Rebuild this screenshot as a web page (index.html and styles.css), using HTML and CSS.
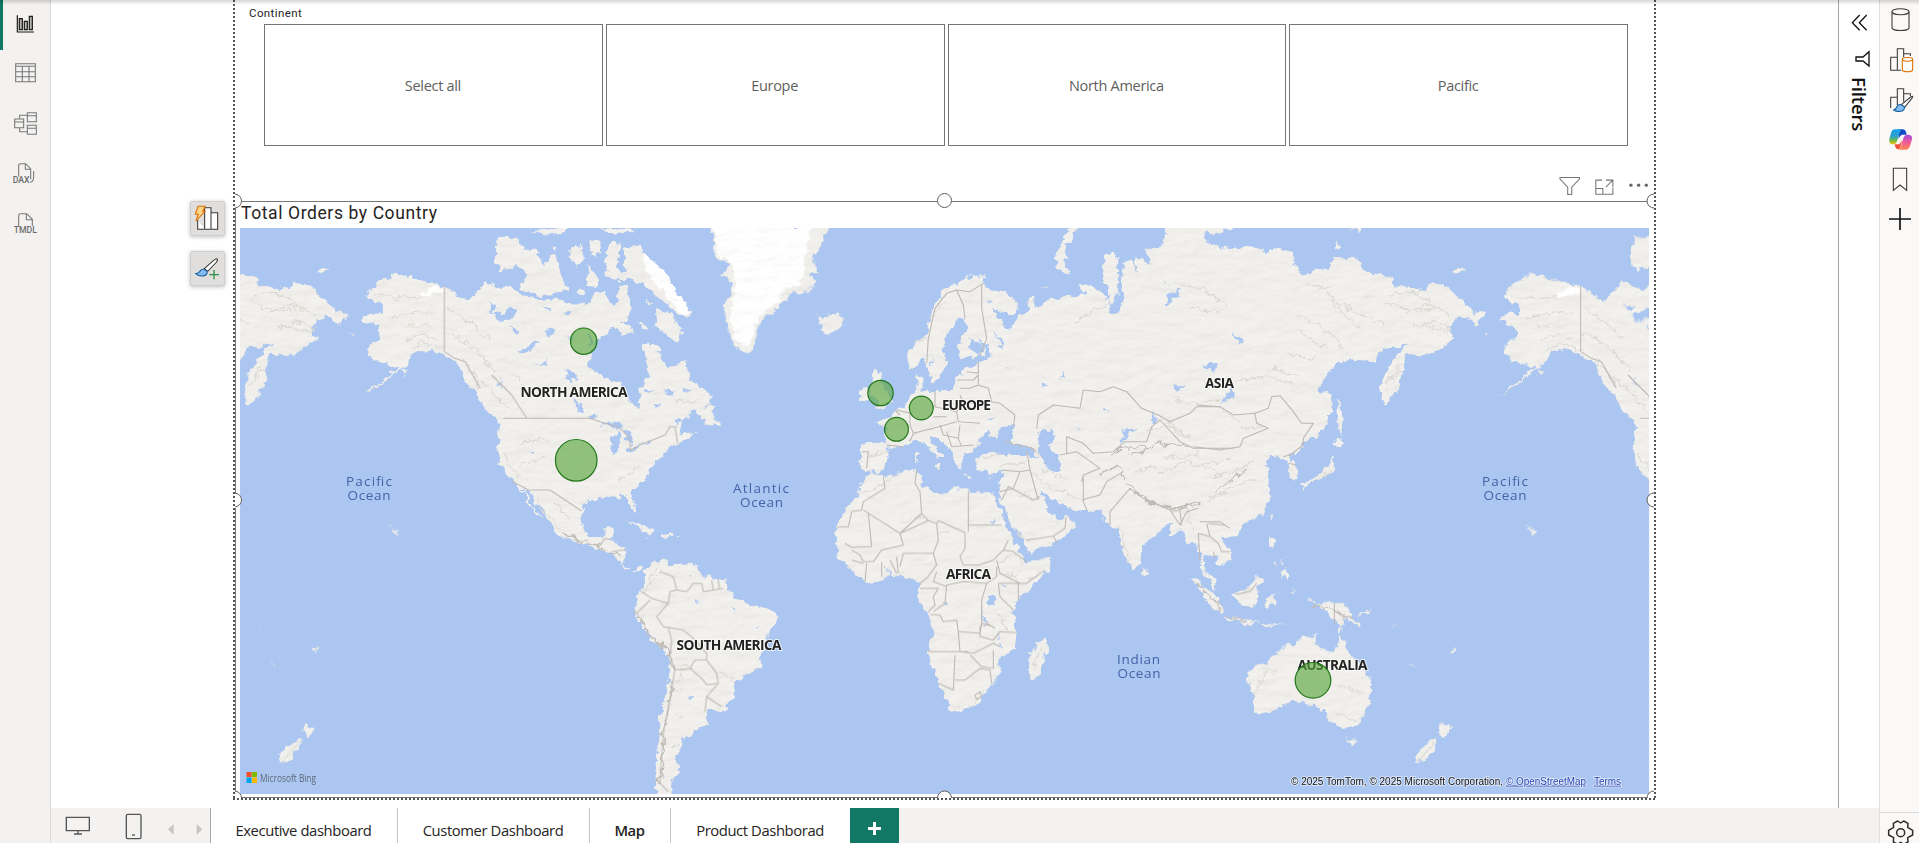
FILE: index.html
```html
<!DOCTYPE html>
<html lang="en">
<head>
<meta charset="utf-8">
<title>Report view</title>
<link rel="stylesheet" href="styles.css">
</head>
<body>
<div class="app">
  <nav class="rail rail-left">
    <a class="rail-item active"><svg viewBox="0 0 150 150" class="ico dark"><path d="M52 46V96H102"/><path class="shade" d="M58 56H67V89H58ZM73 64H82V89H73ZM88 49H97V89H88Z"/></svg></a>
    <a class="rail-item"><svg viewBox="0 150 150 150" class="ico grey"><path d="M47 191H106V245H47ZM47 199H106M47 215H106M47 230H106M67 199V245M87 199V245"/></svg></a>
    <a class="rail-item"><svg viewBox="0 300 150 150" class="ico grey"><path d="M82 338H109V365H82ZM82 347H109M82 376H109V403H82ZM82 385H109M44 357H71V383H44ZM44 366H71M59 357V346H82M59 383V395H82"/></svg></a>
    <a class="rail-item"><svg viewBox="0 450 150 150" class="ico grey"><path d="M56 530V497Q56 491 62 491H77L92 507V538M76 491V508H92M101 513V531Q101 545 91 547"/><text x="38" y="550" textLength="51" lengthAdjust="spacingAndGlyphs">DAX</text></svg></a>
    <a class="rail-item"><svg viewBox="0 600 150 150" class="ico grey"><path d="M56 678V647Q56 641 62 641H80L97 658V678M79 641V659H97"/><text x="41" y="700" textLength="70" lengthAdjust="spacingAndGlyphs">TMDL</text></svg></a>
  </nav>

  <div class="center">
    <div class="workspace">
      <main class="stage">
        <div class="visual-tools">
          <button class="tool"><svg viewBox="570 603 105 105" class="ico"><path class="fill-w dk" d="M593 660V688H653V638H633V623H614V688M614 640V688M633 638V688"/><path class="bolt" d="M594 619H616L608 634H615L588 663L595 643H586Z"/></svg></button>
          <button class="tool"><svg viewBox="570 753 105 105" class="ico"><path class="fill-w dk" d="M613 806L640 782Q650 774 652 777Q654 781 647 789L623 814Z"/><path class="paint" d="M612 808L622 815Q621 827 608 828Q596 829 587 821Q598 820 601 812Q605 806 612 808Z"/><path class="green" d="M642 810V838M628 824H657"/></svg></button>
        </div>
        <section class="report">
          <div class="slicer">
            <h3 class="slicer-title">Continent</h3>
            <div class="slicer-row">
              <button class="chip">Select all</button>
              <button class="chip">Europe</button>
              <button class="chip">North America</button>
              <button class="chip">Pacific</button>
            </div>
          </div>
          <div class="visual-actions">
            <svg viewBox="175 525 275 65" class="ico grey actions-ico"><path d="M181 532H239V537L216 561V583H204V561L181 537ZM307 540H288V582H339V562M288 565H309V582M318 540H339V560M318 561L338 541"/><g class="dots"><circle cx="393" cy="555" r="5"/><circle cx="416" cy="555" r="5"/><circle cx="439" cy="555" r="5"/></g></svg>
          </div>
          <article class="visual">
            <h2 class="visual-title">Total Orders by Country</h2>
            <svg class="map" viewBox="240 228 1409 566" preserveAspectRatio="none">
              <defs>
                <filter id="terrain" filterUnits="userSpaceOnUse" x="235" y="222" width="1420" height="578" color-interpolation-filters="sRGB">
                  <feTurbulence type="fractalNoise" baseFrequency="0.13" numOctaves="3" seed="4" result="n"/>
                  <feDisplacementMap in="SourceGraphic" in2="n" scale="9" xChannelSelector="R" yChannelSelector="G" result="land"/>
                  <feTurbulence type="fractalNoise" baseFrequency="0.04 0.08" numOctaves="3" seed="9" result="h"/>
                  <feDiffuseLighting in="h" surfaceScale="2.4" lighting-color="#fff" result="light"><feDistantLight azimuth="240" elevation="60"/></feDiffuseLighting>
                  <feComposite in="land" in2="light" operator="arithmetic" k1="0.1" k2="0.913" result="lit"/>
                  <feComposite in="lit" in2="land" operator="in"/>
                </filter>
                <filter id="wobble" filterUnits="userSpaceOnUse" x="235" y="222" width="1420" height="578" color-interpolation-filters="sRGB">
                  <feTurbulence type="fractalNoise" baseFrequency="0.13" numOctaves="3" seed="7" result="n"/>
                  <feDisplacementMap in="SourceGraphic" in2="n" scale="10" xChannelSelector="R" yChannelSelector="G"/>
                </filter>

                <g id="land">
                  <!-- North America and the Arctic islands -->
                  <g transform="translate(235 225) scale(.33333)">
                    <path d="M480 145L560 165L628 182L665 205L695 230L720 205L750 170L800 185L840 190L860 215L920 225L960 220L1010 235L1060 235L1080 200L1110 205L1130 240L1150 225L1155 180L1180 185L1190 250L1170 285L1130 315L1090 345L1065 385L1062 425L1110 460L1160 475L1180 520L1210 548L1215 490L1240 450L1225 360L1270 355L1280 400L1300 430L1350 405L1370 470L1430 510L1425 540L1380 560L1325 590L1320 612L1345 585L1340 625L1390 620L1340 650L1290 680L1240 740L1230 765L1190 800L1205 860L1190 855L1170 810L1140 822L1110 815L1050 830L1035 880L1050 935L970 935L930 870L880 795L860 790L900 850L925 885L905 870L870 820L840 770L805 740L790 700L790 590L750 550L720 490L690 460L660 405L600 380L540 375L520 420L490 435L440 480L370 520L440 470L490 425L440 415L400 395L395 370L440 330L430 300L380 290L400 265L440 265L440 240L390 212L430 170Z"/>
                    <path d="M785 35L840 35L870 70L830 130L800 138L778 110ZM870 75L900 70L930 120L960 80L975 140L1000 195L930 215L880 205L850 190L880 150L835 110ZM1010 70L1040 55L1045 110L1025 130L1000 95ZM1065 45L1100 50L1100 80L1080 95L1058 75ZM1060 125L1090 160L1085 190L1055 185ZM1115 160L1112 80L1135 55L1160 50L1145 110L1150 150L1175 145L1165 70L1215 60L1240 100L1300 150L1320 200L1375 260L1350 280L1290 235L1240 190L1190 165L1150 165ZM1235 220L1250 230L1240 242ZM1270 245L1310 270L1345 320L1325 355L1290 325L1255 305ZM1205 290L1240 300L1230 312ZM1145 290L1185 300L1195 325L1155 330ZM1030 190L1050 195L1045 210L1028 208ZM880 22L930 10L1000 10L990 22L940 30ZM1090 10L1200 10L1190 24L1120 25ZM950 65L965 60L970 75ZM500 430L520 440L505 455ZM378 395L393 398M245 138L262 126L282 135L262 146ZM335 325L360 330L345 335Z"/>
                    <path class="ice" d="M1225 80L1245 100L1300 150L1320 200L1365 255L1350 270L1300 225L1265 180L1220 120ZM560 205L600 185L630 190L625 200L550 220Z"/>
                    <path d="M690 455L715 470L730 495L700 490ZM755 550L800 585L790 590ZM1380 555L1440 540L1415 600Z"/>
                    <path d="M1170 888L1230 900L1265 915L1250 922L1200 898Z"/>
                    <path d="M440 895L495 915L485 925Z" opacity=".5"/>
                  </g>
                  <!-- Greenland, Iceland, Newfoundland -->
                  <g transform="translate(640 225) scale(.33333)">
                    <path d="M205 5L218 40L225 95L265 115L235 150L270 160L275 200L250 240L262 300L275 345L300 378L335 390L350 335L365 290L390 265L430 240L445 205L500 205L530 170L510 150L540 145L520 100L545 60L562 10L570 5Z"/>
                    <path class="ice" d="M215 5L228 40L238 90L280 120L285 200L275 240L275 300L290 345L325 365L340 325L355 285L380 255L420 230L435 190L480 185L490 120L500 60L520 5Z"/>
                    <path d="M528 268L545 285L575 268L600 265L618 285L600 310L570 328L540 318L545 300L528 285ZM205 560L225 575L245 605L215 598L188 600Z"/>
                  </g>
                  <!-- Central and South America -->
                  <g transform="translate(560 500) scale(.33333)">
                    <path d="M-30 0L60 0L62 55L75 95L100 112L125 110L135 85L160 85L150 120L195 145L190 190L215 210L245 195L250 215L200 210L165 165L100 140L40 122L0 105Z"/>
                    <path d="M250 215L275 185L310 178L330 192L395 190L430 225L490 240L525 295L560 310L640 330L657 355L630 400L610 440L600 500L525 545L520 590L485 640L440 632L447 678L400 690L390 712L370 715L345 780L362 800L335 850L335 890L292 890L288 800L300 650L325 540L330 470L265 410L220 340L240 270L258 240Z"/>
                    <path d="M195 62L240 75L280 92L262 98L225 78ZM300 100L335 98L340 108L300 113ZM250 110L270 108L268 114ZM350 108L364 112L352 115Z"/>
                  </g>
                  <!-- Europe and western Asia -->
                  <g transform="translate(800 225) scale(.33333)">
                    <path d="M325 425L320 385L350 350L380 330L388 290L400 250L430 200L455 180L500 155L555 150L550 175L580 195L625 205L655 240L650 268L620 268L580 252L600 290L620 315L650 280L690 255L682 215L700 215L710 248L750 220L800 215L855 205L835 180L880 180L920 210L930 245L920 180L905 150L912 95L935 78L955 95L955 200L925 255L950 265L975 225L965 195L968 115L990 100L1010 140L1000 90L1055 120L1035 70L1090 60L1100 0L1340 0L1280 70L1320 65L1320 930L1265 935L1190 900L1110 935L1110 865L960 870L965 935L960 905L935 905L905 860L850 862L800 845L760 825L725 800L745 850L780 890L795 870L830 900L790 935L690 935L640 870L600 820L595 790L610 735L580 745L530 735L520 700L570 680L620 690L690 690L720 700L690 668L630 650L645 600L600 612L585 640L560 622L540 645L525 680L490 690L485 735L465 715L450 670L415 640L388 632L400 655L432 695L412 698L375 660L345 645L310 665L260 665L270 700L250 735L210 742L182 730L182 658L255 655L260 612L225 590L265 580L300 550L330 520L350 490L348 450L368 455L368 500L400 500L460 490L480 450L500 425L540 412L565 395L540 388L480 400L470 365L500 300L492 278L470 292L435 340L430 380L440 410L420 460L395 472L385 430L370 400L345 430Z"/>
                    <path d="M215 430L245 440L245 475L280 530L255 550L218 555L240 530L208 500L220 460ZM180 492L205 482L208 525L176 536ZM808 5L835 8L802 60L796 110L812 155L770 130L763 100L788 50ZM728 190L738 190L735 200ZM400 722L425 722L415 735ZM348 680L358 680L356 710L348 708ZM490 750L515 755L500 758ZM565 755L580 752L570 762ZM690 212L705 212L700 245L685 240Z"/>
                  </g>
                  <!-- Eastern Asia and Japan -->
                  <g transform="translate(1200 225) scale(.33333)">
                    <path d="M60 76L130 62L200 80L240 65L285 80L280 105L310 155L350 130L385 135L400 95L470 100L500 140L580 155L580 180L680 195L690 170L740 185L800 235L820 265L860 265L830 300L785 275L740 305L765 345L700 385L640 395L620 385L610 420L605 470L570 530L550 545L540 490L560 430L600 380L625 350L590 370L555 365L525 410L470 405L410 415L360 480L350 500L395 505L395 560L360 630L310 660L290 680L265 690L290 730L285 765L268 755L265 710L245 700L215 690L190 720L215 735L200 760L215 810L195 860L130 900L90 910L60 940L0 940L-60 800L-60 76Z"/>
                    <path d="M405 688L400 748L345 768L308 795L300 775L350 752L385 720ZM410 635L438 655L420 668L400 660ZM412 515L428 570L420 640L412 600ZM402 52L428 70L405 72ZM208 870L218 868L210 892ZM420 8L490 8L480 18Z"/>
                  </g>
                  <!-- Africa, Arabia, India -->
                  <g transform="translate(800 450) scale(.33333)">
                    <path d="M210 65L255 78L350 55L368 75L362 105L430 135L460 110L500 122L580 130L592 165L625 240L645 275L660 310L680 335L750 325L745 362L655 450L640 490L650 545L645 595L595 632L605 665L570 710L530 770L450 788L440 755L415 700L380 605L400 550L385 490L355 455L360 400L320 385L290 375L200 398L155 365L110 310L108 230L140 170L175 135L185 90Z"/>
                    <path d="M735 558L745 590L715 680L695 688L680 665L690 605ZM595 145L640 230L680 280L685 312L770 280L830 225L800 195L780 215L745 190L720 140L700 90ZM905 150L905 190L925 230L950 235L965 300L1000 358L1022 345L1025 290L1110 220L1112 180L1140 210L1190 290L1210 240L1200 150ZM1030 350L1042 368L1032 382L1022 368Z"/>
                  </g>
                  <!-- Southeast Asia, Australia, New Zealand -->
                  <g transform="translate(1150 500) scale(.33333)">
                    <path d="M60 -20L65 40L90 80L115 135L140 120L155 180L152 205L185 265L200 272L195 240L165 210L160 165L190 170L210 200L248 178L245 150L205 108L225 80L260 80L330 50L362 0Z"/>
                    <path d="M118 235L150 245L220 320L216 342L188 325L150 270ZM222 346L290 358L335 368L300 372L232 360ZM250 280L285 265L320 228L342 240L325 260L332 290L310 322L265 310ZM348 290L400 278L372 290L380 318L362 305L352 335L345 315ZM463 293L490 300L500 315L540 305L572 300L600 335L637 383L580 355L578 378L545 362L525 335ZM620 345L662 325L650 345ZM340 370L415 372L350 382ZM565 380L575 380L575 398L563 396ZM357 110L375 120L365 148L357 140ZM390 210L412 205L412 230L400 228ZM372 180L385 190L378 195ZM395 170L402 190L394 190ZM425 270L433 270L430 290ZM250 92L265 95L258 110Z"/>
                    <path d="M295 510L350 485L385 455L415 425L430 440L455 408L505 405L495 430L550 462L562 440L570 400L600 465L650 510L668 570L635 660L600 687L545 675L520 625L510 635L495 605L480 615L430 600L380 630L315 640L310 590L293 540ZM585 712L622 715L605 745ZM870 670L905 680L885 715L868 700ZM855 710L862 730L830 780L800 790L795 770ZM768 485L795 498L788 502ZM1130 82L1160 98L1150 104ZM895 455L915 440L910 460ZM725 375L742 380L730 382Z"/>
                  </g>
                </g>

                <g id="water">
                  <g transform="translate(235 225) scale(.33333)">
                    <path d="M1090 605L1130 585L1165 605L1150 612L1120 600ZM1135 690L1130 640L1155 615L1148 680ZM1165 615L1195 625L1190 660L1175 650ZM1170 675L1215 660L1205 675L1180 682ZM1210 658L1245 645L1240 655ZM760 235L790 245L775 265ZM780 270L830 250L850 262L815 290L790 290ZM850 375L915 345L890 375L860 382ZM925 320L960 310L965 325L935 335ZM900 420L940 405L935 420ZM1010 520L1030 530L1050 560L1035 565ZM985 430L1005 435L1030 450L1010 475ZM1060 570L1085 575L1070 588ZM990 260L1005 265L995 275ZM920 238L950 260L940 265ZM1220 495L1260 490L1240 505ZM1290 490L1320 495L1305 510ZM1340 488L1370 495L1350 503ZM1260 535L1275 530L1265 550ZM1000 330L1010 335L1005 355ZM830 300L850 320L840 325ZM885 675L898 682L892 690ZM1060 320L1075 350L1060 370ZM790 455L800 490L792 480Z"/>
                  </g>
                  <g transform="translate(800 225) scale(.33333)">
                    <path d="M715 620L750 610L770 635L745 660L775 700L780 735L745 738L722 690L715 650ZM545 350L570 375L578 395L560 398ZM590 320L605 350L608 380L592 350ZM505 340L545 350L550 385L510 385ZM965 615L1015 610L985 625L970 655ZM1255 540L1295 490L1305 505L1275 535ZM1095 235L1110 205L1145 195L1130 220L1100 240ZM1205 420L1245 415L1250 445L1225 435ZM1300 325L1332 345L1315 360ZM1275 70L1210 45L1220 15L1240 30L1300 10L1335 10L1300 40L1320 60ZM725 480L745 478L730 500ZM780 440L790 450L783 460ZM390 410L400 405L392 425ZM568 575L585 572L578 582ZM618 420L635 430L620 430ZM555 220L585 235L560 232ZM1100 170L1105 185L1098 180ZM1120 480L1150 485L1130 500ZM1055 565L1070 580L1058 600ZM835 610L850 618L838 622ZM915 550L930 560L918 565Z"/>
                  </g>
                  <g transform="translate(800 450) scale(.33333)">
                    <path d="M570 437L590 437L588 463L570 460ZM545 465L548 500L568 522L560 525L543 500ZM595 535L600 575L606 595L600 590L593 550ZM565 215L590 210L580 225ZM257 345L272 372L262 372ZM605 400L615 410L608 412ZM430 460L445 455L438 465Z"/>
                  </g>
                  <g transform="translate(560 500) scale(.33333)">
                    <path d="M512 318L524 330L518 335ZM410 298L425 303L415 306ZM585 385L600 376L590 388ZM385 588L400 596L388 596ZM328 430L335 445L330 445ZM385 215L395 220L390 228Z"/>
                  </g>
                </g>

                <g id="ridges">
                  <g transform="translate(235 225) scale(.33333)">
                    <path d="M800 685L830 730L850 750M860 655L900 640L950 655M850 720L900 710L940 690M510 345L560 325L600 345M530 375L570 350L630 380M680 405L715 450L735 490M420 210L500 220L560 215M460 280L540 260L600 265M500 300L590 300M640 250L700 290L760 340M640 320L720 370L780 440M700 430L760 490L820 550M960 830L1000 880M900 820L940 870L975 910M1150 770L1210 720M40 490L75 430M100 260L180 240L240 270M60 210L140 200M130 310L190 290L240 310M840 450L860 480M1320 530L1400 525"/>
                  </g>
                  <g transform="translate(800 225) scale(.33333)">
                    <path class="deep" d="M980 775L1030 820L1090 845L1150 850L1195 835M1000 800L1060 838L1130 846M930 695L960 670L1040 665M990 690L1080 655L1170 662M620 650L680 665L730 695M900 750L950 720L975 760M1250 800L1300 760L1340 735"/>
                    <path d="M1080 745L1160 710L1240 735M700 750L760 790L840 820M730 735L800 760M600 725L690 710M540 700L600 690M1040 620L1100 600L1160 640M1100 590L1170 640M1120 520L1200 540L1260 520M1300 470L1400 460M820 300L870 260L920 245M1140 180L1220 200L1280 240M1170 250L1260 260M1330 610L1400 600M1090 700L1200 690M1220 830L1290 790L1370 760M340 620L400 612M330 640L345 625M350 350L380 340M390 280L440 230M210 690L265 680M1000 740L1070 725"/>
                  </g>
                  <g transform="translate(1200 225) scale(.33333)">
                    <path d="M380 200L420 260L480 310M290 270L370 310L430 370M300 320L380 370M410 230L480 270L560 300M120 470L200 450L280 480M220 430L300 450M320 180L400 190M560 230L640 260L720 250M640 300L740 320M270 390L340 400M60 550L120 590M10 720L90 700M30 760L100 740L160 710M50 800L90 770M580 470L600 420M360 760L395 740M620 200L700 230"/>
                  </g>
                  <g transform="translate(560 500) scale(.33333)">
                    <path class="deep" d="M225 330L270 405L330 460L345 505M340 545L325 620L310 700L308 790L300 850M5 100L60 120L120 140L180 165"/>
                    <path d="M250 280L300 215M265 240L290 200M350 550L370 510L385 520M360 490L395 505M340 570L365 575M480 510L520 540M350 640L370 650M335 740L360 730"/>
                  </g>
                  <g transform="translate(800 450) scale(.33333)">
                    <path d="M190 130L230 115L290 75M600 340L640 310L670 340M610 370L650 380M680 395L720 365M450 770L520 765L550 720M640 240L680 270M590 480L620 540M700 660L725 590M960 230L985 330M420 240L445 250M310 220L370 200M660 130L700 145"/>
                  </g>
                  <g transform="translate(1150 500) scale(.33333)">
                    <path class="deep" d="M490 318L550 330L610 360M135 245L215 325M225 352L290 362"/>
                    <path d="M110 30L130 90M270 285L300 265M310 590L350 520M560 560L640 580M560 640L620 660M805 785L855 725M380 520L340 500"/>
                  </g>
                </g>

                <g id="borders">
                  <path transform="translate(235 225) scale(.33333)" d="M628 182V380M628 380L660 400L690 410L735 490M805 580H1065L1100 592L1150 605L1185 640L1185 675L1215 660L1290 630L1305 605L1320 605L1328 655M770 450L830 510L875 580M830 768L880 795L945 795L990 825L1040 858"/>
                  <path transform="translate(560 500) scale(.33333)" d="M120 135L135 115L150 118M155 155L195 150M300 215L340 230L350 270L380 275L400 250L425 250L430 275L490 265M455 240L460 270M475 240L478 268M245 275L275 295L325 310L330 275L350 270M235 335L270 300M325 310L290 350L310 380L370 390L400 415L440 460L440 480L470 520L475 550L440 590L435 635M325 385L335 420L330 470L345 510L390 505L405 480L440 480M390 505L430 540L440 555L470 550M440 590L485 620M345 505L330 600L310 700L300 850L325 875"/>
                  <path transform="translate(800 225) scale(.33333)" d="M380 415L385 340L405 250L440 205L470 195L490 240L495 280M470 195L510 200L550 175M545 180L545 250L560 340L540 390M500 440L535 445L535 410M470 465L520 465L535 450L535 480L510 490L480 490M535 480L565 490L575 530L490 535L480 510M405 500L405 545L470 560L490 530M575 530L600 535L645 570L640 605M470 560L475 590L540 595M290 555L330 565L330 600L340 625L400 610L470 590M300 570L285 555M400 575L440 575M420 600L430 630L475 640L480 600M440 620L455 665L520 660M475 640L485 665M340 625L330 650M185 680L205 680L200 730M260 660L310 665M710 610L715 570L760 540L840 550L850 495L900 500L940 485L980 500L1025 550L1075 570L1110 590L1170 565L1190 545L1260 545M800 685V635L850 655L880 685L940 680L975 650L1040 650L1055 605L1080 585M1080 585L1140 650L1180 670L1300 670M780 690L830 680L900 730L850 750L845 770M680 675L690 735L705 790L715 825M605 735L660 740L690 735M660 740L640 790L600 800M850 760L850 830L860 855M845 825L900 810L920 770L970 740M930 860L930 900M930 860L990 790L1030 820L1110 855L1190 830M1110 855L1140 900L1160 860L1195 850"/>
                  <path transform="translate(1200 225) scale(.33333)" d="M-10 540L60 545L100 570L165 565L205 550L215 515L240 512L280 560L305 595L340 595L310 640L310 660M165 565L170 595L205 610L130 640L120 665L60 675L-20 665M310 660L270 690L250 695M265 715L290 720M0 890L60 890L90 910"/>
                  <path transform="translate(800 450) scale(.33333)" d="M250 80L255 115L190 155L185 180L155 185L145 230L110 232M350 60L345 100L360 125L365 190L300 250L190 180M205 190L215 290L155 292L135 280M300 250L310 285L245 300L220 335L190 335L180 315L155 300M365 190L385 212L410 220L415 270L400 310L310 310L300 350M505 125V245M410 220L415 212L495 248M505 225H605M495 248V295L480 320L490 345L535 345L580 330L610 300L640 305L680 335M400 310L410 345L380 385L360 400M385 212L300 250M410 365L400 395L440 410M360 415H415L400 440L405 465L385 485M440 405L435 460L400 485M440 405L490 395L560 400L590 380L590 350M560 400L545 450L545 520L580 530M595 400L600 440L640 480M655 400V450M595 400L655 400L680 400L735 360M390 493L420 495L430 515L470 510L475 545L540 550L545 520M475 545L480 605L520 610L580 580L600 590M385 605H505M465 615L460 720L415 700M465 690L495 690L540 655L570 660L575 700M510 615L545 650L580 655L580 600M585 535L560 520L540 530L540 560L580 570L600 545L650 548M525 735L540 725L545 738L530 748ZM245 335L245 380M270 330L290 370M200 340L195 395M155 330L190 340M290 320L295 370M610 300L625 270M590 330L600 370L660 400M680 270L760 258L795 235L798 200M760 258L770 278M605 150L625 110L700 150L720 140"/>
                  <path transform="translate(1150 500) scale(.33333)" d="M553 310V375M145 100L150 180M145 100L180 110L205 130L215 155L240 155M170 70L180 110M190 155L195 175M255 283L300 275L320 250M175 70L225 75M65 35L90 30L95 75"/>
                </g>
              </defs>

              <rect class="ocean" x="240" y="228" width="1409" height="566"/>
              <g class="land" filter="url(#terrain)">
                <use href="#land"/><use href="#land" x="-1136.3"/><use href="#land" x="1136.3"/>
              </g>
              <g filter="url(#wobble)">
                <g class="lakes"><use href="#water"/><use href="#water" x="-1136.3"/><use href="#water" x="1136.3"/></g>
                <g class="ridges"><use href="#ridges"/><use href="#ridges" x="-1136.3"/><use href="#ridges" x="1136.3"/></g>
              </g>
              <g class="borders"><use href="#borders"/><use href="#borders" x="-1136.3"/><use href="#borders" x="1136.3"/></g>

              <g class="continent">
                <text x="520.5" y="397" textLength="107">NORTH AMERICA</text>
                <text x="676.5" y="650" textLength="105">SOUTH AMERICA</text>
                <text x="942" y="410" textLength="49">EUROPE</text>
                <text x="1205" y="388" textLength="29">ASIA</text>
                <text x="946" y="579" textLength="45">AFRICA</text>
                <text x="1297.5" y="670" textLength="70">AUSTRALIA</text>
              </g>
              <g class="sea">
                <text x="346" y="485.5" textLength="46">Pacific</text><text x="347.5" y="500" textLength="43">Ocean</text>
                <text x="733" y="492.5" textLength="56">Atlantic</text><text x="740" y="507" textLength="43">Ocean</text>
                <text x="1117" y="663.5" textLength="43">Indian</text><text x="1117.5" y="678" textLength="43">Ocean</text>
                <text x="1482" y="485.5" textLength="46">Pacific</text><text x="1483.5" y="500" textLength="43">Ocean</text>
              </g>
              <g class="bubbles">
                <circle cx="583.7" cy="341.2" r="13.2"/><circle cx="576.2" cy="460.3" r="20.8"/><circle cx="880.5" cy="393" r="12.7"/><circle cx="921.3" cy="408" r="11.9"/><circle cx="896.5" cy="429.3" r="11.9"/><circle cx="1313" cy="680.3" r="17.8"/>
              </g>
              <g class="bing"><path fill="#f25022" d="M246.500 772H251.500V777H246.500Z"/><path fill="#7fba00" d="M252 772H257V777H252Z"/><path fill="#00a4ef" d="M246.500 777.500H251.500V783H246.500Z"/><path fill="#ffb900" d="M252 777.500H257V783H252Z"/><text x="260" y="782" textLength="56" lengthAdjust="spacingAndGlyphs">Microsoft Bing</text></g>
              <g class="credit">
                <text x="1291" y="784.500" textLength="212" lengthAdjust="spacingAndGlyphs">© 2025 TomTom, © 2025 Microsoft Corporation,</text>
                <text class="link" x="1506" y="784.500" textLength="80" lengthAdjust="spacingAndGlyphs">© OpenStreetMap</text>
                <text class="link" x="1594" y="784.500" textLength="27" lengthAdjust="spacingAndGlyphs">Terms</text>
              </g>
            </svg>
          </article>
          <svg class="selection" viewBox="235 192 1419 606"><path d="M235.500 208V493M235.500 508V791M242 201.500H1647M242 797.500H1647"/><circle cx="234.500" cy="201" r="7"/><circle cx="944.500" cy="200.500" r="7"/><circle cx="1654" cy="201" r="7"/><circle cx="234.500" cy="500" r="7"/><circle cx="1654" cy="500" r="7"/><circle cx="234.500" cy="798" r="7"/><circle cx="944.500" cy="798" r="7"/><circle cx="1654" cy="798" r="7"/></svg>
        </section>
      </main>
      <aside class="filters">
        <svg viewBox="1017 0 120 225" class="ico black filters-ico"><path d="M1079 45L1057 68L1079 91M1100 45L1078 68L1100 91M1107 155V198L1089 183H1068V171H1089Z"/></svg>
        <span class="filters-label">Filters</span>
      </aside>
    </div>
    <footer class="tabs">
      <div class="views">
        <svg viewBox="3 24 480 105" class="views-ico"><path d="M49 52H118V92H49ZM84 92V101M72 102H96"/><rect x="229" y="43" width="44" height="73" rx="4"/><path d="M246 105H255"/><path class="arrow" d="M371 72V104L354 88ZM440 72V104L457 88Z"/></svg>
      </div>
      <a class="tab t1">Executive dashboard</a>
      <a class="tab t2">Customer Dashboard</a>
      <a class="tab t3 current">Map</a>
      <a class="tab t4">Product Dashborad</a>
      <button class="add"><svg viewBox="0 0 49 35"><path d="M24.500 14V27M18 20.500H31"/></svg></button>
    </footer>
  </div>

  <nav class="rail rail-right">
    <svg viewBox="1140 0 117 120" class="ico dk"><path d="M1176 35V84C1180 94 1223 94 1227 84V35"/><ellipse cx="1201.500" cy="35" rx="25.500" ry="9"/></svg>
    <svg viewBox="1140 120 117 120" class="ico dk"><path d="M1192 211H1172V172H1192M1192 211V146H1211V172M1192 211H1203M1211 161H1231V168"/><path class="orange" d="M1207 178V210C1210 217 1235 217 1238 210V178"/><ellipse class="orange" cx="1222.500" cy="178" rx="15.500" ry="5.500"/></svg>
    <svg viewBox="1140 240 117 120" class="ico dk"><path d="M1172 324V292H1192M1192 315V266H1211V305M1211 281H1231V288"/><path class="fill-w" d="M1204 314L1232 291Q1240 286 1237 293L1214 322Z"/><path class="paint" d="M1203 314L1214 321Q1213 333 1201 334Q1190 336 1181 330Q1190 326 1191 319Q1196 312 1203 314Z"/></svg>
    <svg viewBox="1140 360 117 120" class="ico"><defs><linearGradient id="ca" x1="0" y1="0" x2="0" y2="1"><stop offset="0" stop-color="#16a3ee"/><stop offset=".45" stop-color="#2f9fd0"/><stop offset=".7" stop-color="#5dba58"/><stop offset="1" stop-color="#f5c400"/></linearGradient><linearGradient id="cb" x1="0" y1="0" x2="0" y2="1"><stop offset="0" stop-color="#a349e0"/><stop offset=".5" stop-color="#ee5a9a"/><stop offset="1" stop-color="#ff8a50"/></linearGradient></defs><g stroke="none"><path fill="#1748c5" d="M1195 388H1209Q1216 388 1218 396L1220 404H1206Q1200 405 1196 416Z"/><path fill="url(#ca)" d="M1183 388H1206Q1201 390 1199 398L1191 424Q1188 433 1180 433Q1165 434 1168 418L1173 398Q1176 389 1183 388Z"/><path fill="#f0503c" d="M1184 433H1198L1207 420L1201 441Q1199 448 1194 448Q1187 447 1186 440Z"/><path fill="url(#cb)" d="M1221 404Q1239 403 1236 418L1230 438Q1227 448 1219 449H1195Q1201 447 1203 439L1211 412Q1214 404 1221 404Z"/></g></svg>
    <svg viewBox="1140 480 117 120" class="ico dk"><path d="M1180 505H1220V571L1200 555L1180 571Z"/></svg>
    <svg viewBox="1140 600 117 120" class="ico black"><path stroke-width="5" d="M1200 624V690M1167 657H1233"/></svg>
    <div class="settings"><svg viewBox="300 188 117 93" class="ico gear"><path d="M353 212L362 218L371 212L384 219L383 231L398 240V254L383 262L384 275L371 282L362 276L353 282L340 275L341 262L326 254V240L341 231L340 219Z"/><circle cx="362" cy="247" r="12"/></svg></div>
  </nav>
</div>
<div class="top-shadow"></div>
</body>
</html>
```
FILE: styles.css
```css
* { box-sizing: border-box; }
body { margin: 0; background: #fff; font-family: "Open Sans", "Noto Sans", sans-serif; color: #252423; overflow: hidden; }
svg { display: block; }
button { font: inherit; padding: 0; }
h2, h3 { margin: 0; font-weight: 400; font-family: Roboto, sans-serif; }

.app { display: flex; width: 1919px; height: 843px; }
.rail { flex: none; display: flex; flex-direction: column; }
.rail-left { width: 51px; background: #f3f2f1; border-right: 1px solid #dcdbda; }
.rail-item { height: 50px; display: block; }
.rail-item svg { width: 50px; height: 50px; }
.rail-item.active { box-shadow: inset 3px 0 #117865; }
.rail-right { width: 40px; background: #faf9f8; border-left: 1px solid #e1dfdd; }
.rail-right > svg { width: 39px; height: 40px; }
.settings { margin-top: auto; height: 31px; border-top: 1px solid #d8d8d8; }
.settings svg { width: 39px; height: 31px; }

.ico { fill: none; stroke-width: 3.2; }
.ico.grey { stroke: #777; }
.ico.grey text { fill: #6b6b6b; stroke: none; font: 500 25px Roboto, sans-serif; }
.ico.dark { stroke: #1b1a19; stroke-width: 3.6; }
.ico .shade { fill: #b5b5b5; }
.ico.black { stroke: #111; stroke-width: 4; }
.ico.dk, .dk { stroke: #3b3a39; }
.ico.gear { stroke: #2f2e2d; stroke-width: 4.5; stroke-linejoin: round; }
.fill-w { fill: #fff; }
.bolt { fill: #fcd78a; stroke: #e06c00; }
.paint { fill: #84bdf0; stroke: #14609c; }
.green { stroke: #2f8f46; stroke-width: 4; }
.orange { stroke: #e06c00; fill: #fff; }
.dots { fill: #666; stroke: none; }

.center { flex: 1; min-width: 0; display: flex; flex-direction: column; }
.workspace { height: 808px; display: flex; }
.stage { flex: 1; display: flex; }
.visual-tools { width: 182px; padding: 201px 8px 0 0; display: flex; flex-direction: column; align-items: flex-end; gap: 15px; }
.tool { width: 35px; height: 35px; border: 1px solid #d0cfce; border-radius: 2px; background: #e1dfdd; box-shadow: 0 1px 4px rgba(0,0,0,.25); }
.tool svg { width: 35px; height: 35px; margin: -1px; }

.report {
  position: relative; width: 1423px; height: 800px; padding: 0 7px 0 7px;
  background:
    repeating-linear-gradient(#555 0 2px, transparent 2px 4px) left / 2px 100% no-repeat,
    repeating-linear-gradient(#555 0 2px, transparent 2px 4px) right / 2px 100% no-repeat,
    repeating-linear-gradient(90deg, #555 0 2px, transparent 2px 4px) bottom / 100% 2px no-repeat;
}
.slicer { height: 174px; padding: 5px 21px 0 24px; }
.slicer-title { margin-left: -15px; height: 19px; font-size: 11.5px; line-height: 16px; letter-spacing: .4px; }
.slicer-row { display: grid; grid-template-columns: repeat(4, 1fr); gap: 3px; height: 122px; }
.chip { border: 1px solid #757575; background: #fff; color: #605e5c; font-size: 14.5px; letter-spacing: -.3px; padding-right: 1px; }
.visual-actions { height: 24px; display: flex; justify-content: flex-end; margin-right: -1px; }
.actions-ico { width: 92px; height: 22px; margin-top: 1px; }
.visual { display: flex; flex-direction: column; }
.visual-title { height: 30px; padding: 2px 0 0 1px; font-size: 17.5px; line-height: 26px; letter-spacing: .6px; }
.selection { position: absolute; left: 2px; top: 192px; width: 1419px; height: 606px; fill: #fff; stroke: #605e5c; pointer-events: none; }
.selection path { fill: none; stroke: #777; }

.map { width: 1409px; height: 566px; }
.ocean { fill: #abc6f1; }
.land { fill: #f0efeb; }
.ice { fill: #fefefe; }
.lakes { fill: #abc6f1; }
.ridges { fill: none; stroke: #dbd9d4; stroke-width: 3.6; }
.ridges, .deep { stroke-linecap: round; }
.deep { stroke: #bfbcb8; stroke-width: 5; }
.borders { fill: none; stroke: #beb8b4; stroke-width: 3.2; stroke-linejoin: round; }
.continent { font: 700 13.8px "Open Sans", sans-serif; fill: #222; stroke: #fff; stroke-width: 2px; stroke-opacity: .7; paint-order: stroke; }
.sea { font: 500 13.5px "Open Sans", sans-serif; fill: #4264a8; }
.bubbles { fill: rgba(86,164,56,.62); stroke: #23771a; stroke-width: 1.2; }
.bing text { font: 10px "Open Sans", sans-serif; fill: #5f6874; }
.credit { font: 10px "Liberation Sans", sans-serif; fill: #111; stroke: #fff; stroke-width: 1.6px; stroke-opacity: .65; paint-order: stroke; }
.credit .link { fill: #2a45b0; text-decoration: underline; }

.filters { width: 41px; border-left: 1px solid #a6a6a6; display: flex; flex-direction: column; align-items: center; }
.filters-ico { width: 40px; height: 75px; }
.filters-label { writing-mode: vertical-rl; font-size: 18.5px; line-height: 24px; font-weight: 600; color: #111; padding: 2px 0 0 0; letter-spacing: -.15px; }

.tabs { flex: 1; display: flex; background: #f3f2f1; }
.views { width: 160px; border-right: 1px solid #a8a8a8; }
.views-ico { width: 160px; height: 35px; fill: none; stroke: #555; stroke-width: 4; }
.views-ico .arrow { fill: #c8c6c4; stroke: none; }
.tab { height: 35px; background: #fff; border-right: 1px solid #c8c6c4; padding-right: 1px; text-align: center; font-size: 14.8px; line-height: 45px; letter-spacing: -.4px; white-space: nowrap; overflow: hidden; }
.t1 { width: 187px; }
.t2 { width: 192px; }
.t3 { width: 81px; }
.t4 { width: 179px; border-right: 0; }
.current { font-weight: 600; }
.add { width: 49px; height: 35px; border: 0; background: #117865; }
.add svg { width: 49px; height: 35px; stroke: #fff; stroke-width: 3; }
.top-shadow { position: absolute; left: 0; top: 0; width: 100%; height: 5px; background: linear-gradient(rgba(0,0,0,.16), rgba(0,0,0,0)); }
```
